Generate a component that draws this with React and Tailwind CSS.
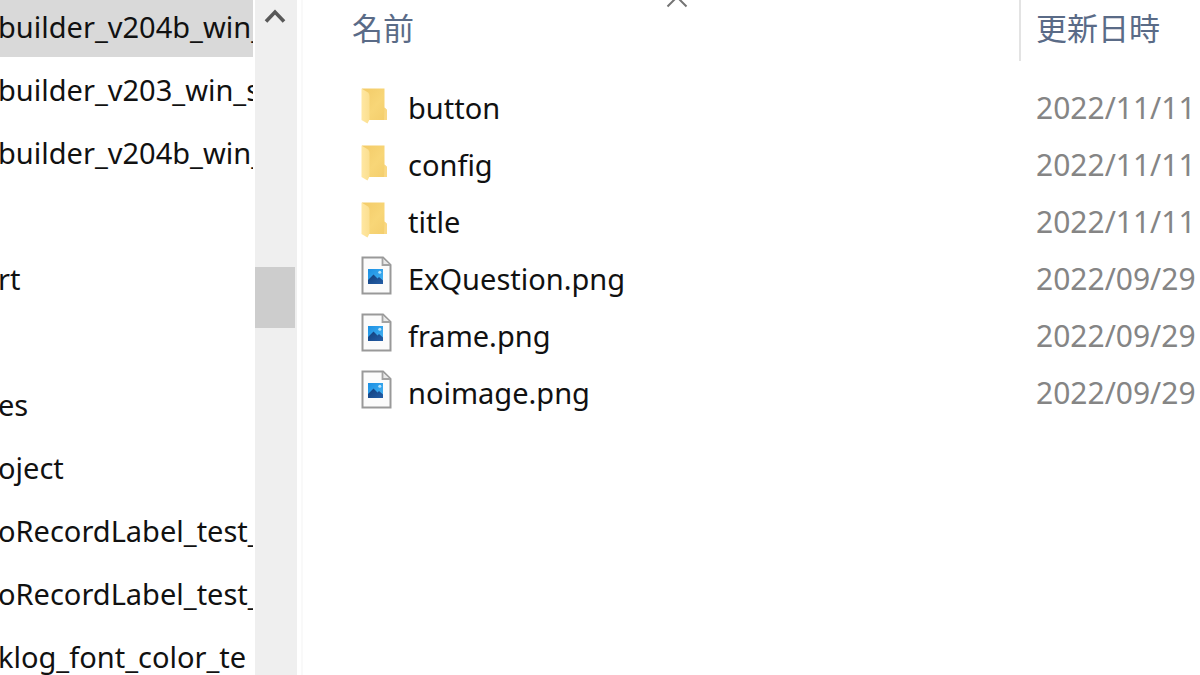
import React from "react";

const treeItems = [
  { id: 1, label: "builder_v204b_win_", selected: true },
  { id: 2, label: "builder_v203_win_s" },
  { id: 3, label: "builder_v204b_win_" },
  { id: 4, label: "" },
  { id: 5, label: "rt" },
  { id: 6, label: "" },
  { id: 7, label: "es" },
  { id: 8, label: "oject" },
  { id: 9, label: "oRecordLabel_test_" },
  { id: 10, label: "oRecordLabel_test_" },
  { id: 11, label: "klog_font_color_te" },
];

const files = [
  { name: "button", date: "2022/11/11", folder: true },
  { name: "config", date: "2022/11/11", folder: true },
  { name: "title", date: "2022/11/11", folder: true },
  { name: "ExQuestion.png", date: "2022/09/29" },
  { name: "frame.png", date: "2022/09/29" },
  { name: "noimage.png", date: "2022/09/29" },
];

function FolderIcon() {
  return (
    <svg className="h-10 w-8 shrink-0" viewBox="0 0 32 40" aria-hidden="true">
      <defs>
        <linearGradient id="folderBack" x1="0" y1="0" x2="1" y2="1">
          <stop offset="0" stopColor="#f3cb68" />
          <stop offset="0.55" stopColor="#f8d677" />
          <stop offset="1" stopColor="#f3cd6c" />
        </linearGradient>
        <linearGradient id="folderFlap" x1="0" y1="0" x2="1" y2="0">
          <stop offset="0" stopColor="#ffe7a2" />
          <stop offset="1" stopColor="#fbdf90" />
        </linearGradient>
      </defs>
      <path d="M2 3.5H24.5V22.5L27 25V35H7L2 30Z" fill="url(#folderBack)" />
      <path d="M24.5 22.5L27 25V35H24Z" fill="#f9d884" />
      <path d="M1.5 3.5L8 7.5Q9.5 8.5 9.5 11V34.5L7.5 38.5L1.5 35Z" fill="url(#folderFlap)" />
    </svg>
  );
}

function ImageFileIcon() {
  return (
    <svg className="h-10 w-8 shrink-0" viewBox="0 0 32 40" aria-hidden="true">
      <defs>
        <linearGradient id="sky" x1="0" y1="0" x2="1" y2="1">
          <stop offset="0" stopColor="#1a8fe3" />
          <stop offset="1" stopColor="#48b4f2" />
        </linearGradient>
        <linearGradient id="hill" x1="0" y1="0" x2="1" y2="1">
          <stop offset="0" stopColor="#123f7c" />
          <stop offset="1" stopColor="#235da6" />
        </linearGradient>
      </defs>
      <path d="M2.5 1.5H23L30.5 9V37.5H2.5Z" fill="#fbfbfb" stroke="#999" strokeWidth="2" />
      <path d="M22.5 2V9H30" fill="#e9e9e9" stroke="#a3a3a3" strokeWidth="1.8" />
      <rect x="8" y="13" width="15" height="15" fill="url(#sky)" />
      <path d="M8 24L13.5 18.5L17.5 22.5L19 21L23 24.5V28H8Z" fill="url(#hill)" />
      <circle cx="19.8" cy="16.2" r="1.5" fill="#b9e3fb" />
    </svg>
  );
}

function FolderTree() {
  return (
    <nav aria-label="Folders" className="-mt-1.5 w-[253px] shrink-0 overflow-hidden">
      <ul>
        {treeItems.map((item) => (
          <li key={item.id} className={item.selected ? "h-[63px] bg-[#d9d9d9]" : "h-[63px]"}>
            {item.label && (
              <button
                type="button"
                className="-ml-0.5 block h-full w-full whitespace-nowrap pt-0.5 text-left text-[29px] text-[#111]"
              >
                {item.label}
              </button>
            )}
          </li>
        ))}
      </ul>
    </nav>
  );
}

function ScrollTrack() {
  return (
    <div className="ml-0.5 flex w-[42px] shrink-0 flex-col bg-[#efefef]">
      <button type="button" aria-label="Scroll up" className="flex h-8 w-10 items-center justify-center">
        <svg className="h-5 w-6" viewBox="0 0 24 20" aria-hidden="true">
          <path d="M3 15.5L12 6L21 15.5" fill="none" stroke="#585858" strokeWidth="3.6" />
        </svg>
      </button>
      <div className="mt-[235px] h-[61px] w-10 bg-[#cdcdcd]" />
    </div>
  );
}

function FileTable() {
  return (
    <table className="w-full table-fixed border-collapse">
      <thead>
        <tr className="h-20 align-top text-[31px] text-[#5a6b87]">
          <th scope="col" aria-sort="ascending" className="relative p-0 text-left font-normal">
            <button type="button" className="flex h-[61px] w-full items-center pb-1 pl-[17px]">
              名前
            </button>
            <svg
              className="absolute left-1/2 top-0 h-2 w-6 -translate-x-1/2"
              viewBox="0 0 24 8"
              aria-hidden="true"
            >
              <path d="M2.5 6.5L12 -3L21.5 6.5" fill="none" stroke="#747474" strokeWidth="2" />
            </svg>
          </th>
          <th scope="col" className="w-[181px] p-0 text-left font-normal">
            <button
              type="button"
              className="flex h-[61px] w-full items-center whitespace-nowrap border-l-2 border-[#e3e3e3] pb-1 pl-[15px]"
            >
              更新日時
            </button>
          </th>
        </tr>
      </thead>
      <tbody>
        {files.map((file) => (
          <tr key={file.name} className="h-[57px]">
            <td className="p-0">
              <div className="flex h-[57px] items-center gap-4 pl-[25px]">
                <div className="pb-[7px]">{file.folder ? <FolderIcon /> : <ImageFileIcon />}</div>
                <span className="truncate pb-0.5 text-[29px] leading-[55px] text-[#111]">{file.name}</span>
              </div>
            </td>
            <td className="whitespace-nowrap p-0 pb-0.5 pl-[17px] text-[30px] leading-[55px] text-[#858585]">
              {file.date}
            </td>
          </tr>
        ))}
      </tbody>
    </table>
  );
}

export default function App() {
  return (
    <div className="flex h-screen overflow-hidden bg-white font-['Noto_Sans','Noto_Sans_CJK_JP',sans-serif]">
      <FolderTree />
      <ScrollTrack />
      <main className="ml-1 min-w-0 flex-1 overflow-hidden border-l-2 border-[#f9f9f9] pl-8">
        <FileTable />
      </main>
    </div>
  );
}
